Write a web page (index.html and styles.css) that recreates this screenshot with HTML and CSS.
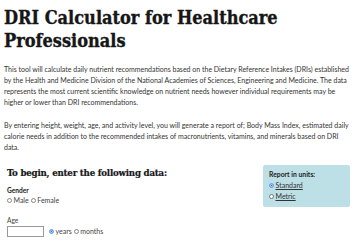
FILE: index.html
```html
<!DOCTYPE html>
<html>
<head>
<meta charset="utf-8">
<link rel="stylesheet" href="styles.css">
</head>
<body>
<div class="page">
  <h1 class="title">DRI Calculator for Healthcare Professionals</h1>
  <p class="intro">This tool will calculate daily nutrient recommendations based on the Dietary Reference Intakes (DRIs) established<br>by the Health and Medicine Division of the National Academies of Sciences, Engineering and Medicine. The data<br>represents the most current scientific knowledge on nutrient needs however individual requirements may be<br>higher or lower than DRI recommendations.</p>
  <p class="intro">By entering height, weight, age, and activity level, you will generate a report of; Body Mass Index, estimated daily<br>calorie needs in addition to the recommended intakes of macronutrients, vitamins, and minerals based on DRI<br>data.</p>
  <div class="form-row">
    <div class="form-main">
      <h2 class="subtitle">To begin, enter the following data:</h2>
      <div class="field">
        <div class="label-bold">Gender</div>
        <div class="radios">
          <label class="opt"><span class="radio"></span>Male</label>
          <label class="opt"><span class="radio"></span>Female</label>
        </div>
      </div>
      <div class="field age">
        <div class="label">Age</div>
        <div class="radios">
          <span class="textbox"></span>
          <label class="opt"><span class="radio on"></span>years</label>
          <label class="opt"><span class="radio"></span>months</label>
        </div>
      </div>
    </div>
    <div class="units">
      <div class="label-bold">Report in units:</div>
      <label class="opt link"><span class="radio on"></span><u>Standard</u></label>
      <label class="opt link"><span class="radio white"></span><u>Metric</u></label>
    </div>
  </div>
</div>
</body>
</html>
```
FILE: styles.css
```css
html, body { margin: 0; padding: 0; background: #fff; }
.page { padding: 0 4px; }
.title {
  font-family: "DejaVu Serif Condensed", "DejaVu Serif", serif;
  font-weight: bold;
  font-size: 18px;
  letter-spacing: 0;
  line-height: 23px;
  color: #161616;
  -webkit-text-stroke: 0.35px #161616;
  margin: 6px 0 12px 0;
}
.intro {
  font-family: "Lato", sans-serif;
  font-size: 7px;
  line-height: 11px;
  color: #333;
  margin: 0 0 12px 0;
  white-space: nowrap;
}
.form-row { display: flex; justify-content: space-between; align-items: flex-start; }
.form-main { padding-left: 3px; }
.subtitle {
  font-family: "DejaVu Serif Condensed", "DejaVu Serif", serif;
  font-weight: bold;
  font-size: 9.6px;
  letter-spacing: -0.2px;
  line-height: 14px;
  color: #161616;
  -webkit-text-stroke: 0.2px #161616;
  margin: 1px 0 6px 0;
}
.label-bold { font-family: "Lato", sans-serif; font-weight: bold; font-size: 6.6px; line-height: 9px; color: #222; }
.label { font-family: "Lato", sans-serif; font-size: 6.6px; line-height: 9px; color: #444; }
.radios { display: flex; align-items: center; gap: 2px; }
.opt { display: inline-flex; align-items: center; font-family: "Lato", sans-serif; font-size: 7px; line-height: 11px; color: #444; }
.radio { width: 5px; height: 5px; border: 0.6px solid #888; border-radius: 50%; margin-right: 1.5px; box-sizing: border-box; background: #fff; }
.radio.on { border: 1px solid #7aa3e8; background: #3a78e0; box-shadow: inset 0 0 0 0.8px #bcd3f7; }
.field { margin-bottom: 10px; }
.age .label { margin-bottom: 1px; }
.textbox { display: inline-block; width: 37px; height: 11px; border: 1px solid #999; box-sizing: border-box; margin-right: 3px; background: #fff; }
.units {
  background: #bddfe6;
  border-radius: 2px;
  width: 87px;
  height: 42px;
  box-sizing: border-box;
  padding: 5px 6px;
  margin-right: 6px;
}
.units .label-bold { margin-bottom: 1px; font-size: 6.8px; }
.units .opt { display: flex; color: #333; line-height: 11px; }
.units .radio.white { border-color: #777; }
```
